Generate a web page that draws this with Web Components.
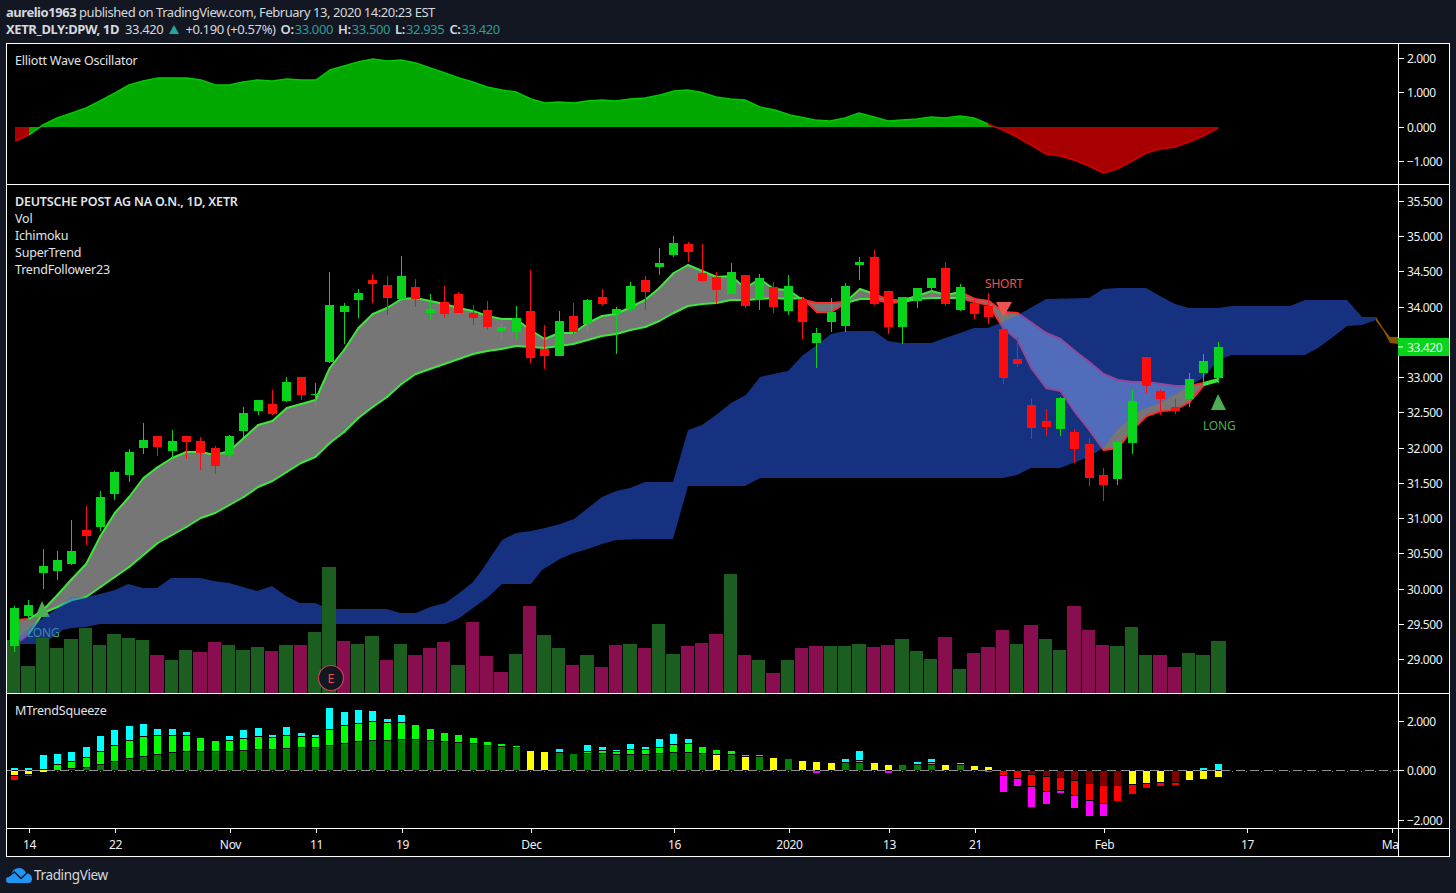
<!DOCTYPE html>
<html>
<head>
<meta charset="utf-8">
<title>XETR_DLY:DPW</title>
<style>
  html, body { margin: 0; background: #131722; overflow: hidden; }
  body { font-family: "Noto Sans", "Liberation Sans", sans-serif; }
</style>
</head>
<body>
<tv-page>
  <tv-header slot="header">
    <div class="title"><b>aurelio1963</b> published on TradingView.com, February 13, 2020 14:20:23 EST</div>
    <div class="quote">
      <b>XETR_DLY:DPW, 1D</b>
      <span class="last">33.420</span>
      <svg class="up" width="10" height="9" viewBox="0 0 10 9"><path d="M5 0 10 9H0Z" fill="#26a69a"/></svg>
      <span>+0.190 (+0.57%)</span>
      <tv-ohlc label="O:" value="33.000"></tv-ohlc>
      <tv-ohlc label="H:" value="33.500"></tv-ohlc>
      <tv-ohlc label="L:" value="32.935"></tv-ohlc>
      <tv-ohlc label="C:" value="33.420"></tv-ohlc>
    </div>
  </tv-header>
  <tv-frame slot="frame">
    <tv-pane style="height:140px">
      <tv-legend slot="legend">Elliott Wave Oscillator</tv-legend>
      <tv-osc-plot slot="plot"></tv-osc-plot>
      <tv-price-axis slot="axis" top="44" height="140" ticks="2.000:58,1.000:92,0.000:127,−1.000:161"></tv-price-axis>
    </tv-pane>
    <tv-pane style="height:508px" class="sep">
      <tv-legend slot="legend"><b>DEUTSCHE POST AG NA O.N., 1D, XETR</b><br>Vol<br>Ichimoku<br>SuperTrend<br>TrendFollower23</tv-legend>
      <tv-main-plot slot="plot"></tv-main-plot>
      <tv-price-axis slot="axis" top="185" height="508" tag="33.420" tag-y="347"
        ticks="35.500:201,35.000:236,34.500:271,34.000:307,33.000:377,32.500:412,32.000:448,31.500:483,31.000:518,30.500:553,30.000:589,29.500:624,29.000:659"></tv-price-axis>
    </tv-pane>
    <tv-pane style="height:134px" class="sep">
      <tv-legend slot="legend">MTrendSqueeze</tv-legend>
      <tv-squeeze-plot slot="plot"></tv-squeeze-plot>
      <tv-price-axis slot="axis" top="694" height="134" ticks="2.000:721,0.000:770,−2.000:820"></tv-price-axis>
    </tv-pane>
    <tv-time-axis></tv-time-axis>
  </tv-frame>
  <tv-footer slot="footer">TradingView</tv-footer>
</tv-page>

<script>
const FONT = '"Noto Sans", "Liberation Sans", sans-serif';
const PLOT_W = 1391;
const xAt = i => 14.5 + 14.33 * i;
const pts = a => a.map(p => p.join(',')).join(' ');

// wraps page coordinates into an svg that only shows its own pane
function plotSvg(top, height, body) {
    return `<style>:host{display:block;height:100%;background:#000} svg{display:block}</style>
    <svg width="${PLOT_W}" height="${height}" viewBox="7 ${top} ${PLOT_W} ${height}">${body}</svg>`;
}

class TvPage extends HTMLElement {
    constructor() {
        super();
        this.attachShadow({ mode: 'open' });
        this.shadowRoot.innerHTML = `<style>
          :host { display: flex; flex-direction: column; width: 1456px; height: 893px; background: #131722; }
        </style>
        <slot name="header"></slot><slot name="frame"></slot><slot name="footer"></slot>`;
    }
}

class TvHeader extends HTMLElement {
    constructor() {
        super();
        this.attachShadow({ mode: 'open' });
        this.shadowRoot.innerHTML = `<style>
          :host { display: block; height: 43px; box-sizing: border-box; padding: 4px 0 0 6px; color: #d6d8de;
                  font: 13px/17px ${FONT}; letter-spacing: -0.4px; white-space: nowrap; }
          ::slotted(.title) { height: 17px; letter-spacing: -0.46px; }
          ::slotted(.quote) { display: flex; align-items: center; gap: 6px; height: 17px; letter-spacing: -0.38px; }
        </style><slot></slot>`;
    }
}

class TvOhlc extends HTMLElement {
    constructor() {
        super();
        this.attachShadow({ mode: 'open' });
        this.shadowRoot.innerHTML = `<style>
          :host { display: inline-flex; margin-left: -1px; }
          b { font-weight: 600; color: #d6d8de; margin-right: 1px; }
          span { color: #2a9d94; }
        </style><b></b><span></span>`;
    }
    connectedCallback() {
        this.shadowRoot.querySelector('b').textContent = this.getAttribute('label');
        this.shadowRoot.querySelector('span').textContent = this.getAttribute('value');
    }
}

class TvFrame extends HTMLElement {
    constructor() {
        super();
        this.attachShadow({ mode: 'open' });
        this.shadowRoot.innerHTML = `<style>
          :host { display: flex; flex-direction: column; box-sizing: border-box; width: 1444px; height: 814px;
                  margin-left: 6px; border: 1px solid #fff; background: #000; }
          ::slotted(.sep) { border-top: 1px solid #fff; }
        </style><slot></slot>`;
    }
}

class TvPane extends HTMLElement {
    constructor() {
        super();
        this.attachShadow({ mode: 'open' });
        this.shadowRoot.innerHTML = `<style>
          :host { display: grid; grid-template-columns: 1391px 51px; position: relative; flex: none; box-sizing: content-box; }
          .legend { position: absolute; left: 8px; top: 8px; z-index: 2; }
        </style>
        <div class="legend"><slot name="legend"></slot></div>
        <slot name="plot"></slot><slot name="axis"></slot>`;
    }
}

class TvLegend extends HTMLElement {
    constructor() {
        super();
        this.attachShadow({ mode: 'open' });
        this.shadowRoot.innerHTML = `<style>
          :host { display: block; color: #e2e4e8; font: 12.5px/17px ${FONT}; letter-spacing: -0.2px; white-space: nowrap; }
          ::slotted(b) { font-weight: 600; }
        </style><slot></slot>`;
    }
}

class TvPriceAxis extends HTMLElement {
    constructor() {
        super();
        this.attachShadow({ mode: 'open' });
    }
    connectedCallback() {
        const top = +this.getAttribute('top'), h = +this.getAttribute('height');
        const ticks = this.getAttribute('ticks').split(',').map(t => t.split(':'));
        let body = ticks.map(([label, y]) =>
            `<rect x="1399" y="${y}" width="5" height="1" fill="#fff"/><text x="1407" y="${+y + 4.5}">${label}</text>`).join('');
        const tag = this.getAttribute('tag');
        if (tag) {
            const y = +this.getAttribute('tag-y');
            body += `<rect x="1398" y="${y - 9}" width="51" height="18" fill="#08d41c"/>
              <rect x="1398" y="${y - 0.5}" width="5" height="1" fill="#fff"/>
              <text x="1407" y="${y + 4.5}">${tag}</text>`;
        }
        this.shadowRoot.innerHTML = `<style>
          :host { display: block; background: #000; border-left: 1px solid #fff; box-sizing: border-box; }
          svg { display: block; }
          text { fill: #f0f1f4; font: 12px ${FONT}; letter-spacing: -0.4px; }
        </style><svg width="50" height="${h}" viewBox="1399 ${top} 50 ${h}" overflow="visible">${body}</svg>`;
    }
}

class TvOscPlot extends HTMLElement {
    constructor() {
        super();
        this.attachShadow({ mode: 'open' });
        const line = [[15,141],[29,135],[43,125],[57,118],[72,113],[86,108],[100,101],[115,93],[129,85],[143,81],[158,78],[172,78],[187,78],[201,80],[215,85],[229,85],[243,82],[257,80],[272,81],[287,79],[301,80],[316,80],[330,70],[344,66],[358,62],[373,59],[387,61],[401,60],[416,63],[430,68],[445,73],[459,78],[473,82],[487,87],[502,90],[516,92],[531,99],[545,103],[558,102],[574,103],[587,101],[602,100],[616,101],[630,99],[645,98],[660,95],[674,91],[687,90],[700,92],[716,97],[730,99],[745,100],[760,107],[775,110],[790,115],[815,120],[830,121],[845,118],[859,113],[874,117],[888,121],[902,120],[917,119],[931,117],[945,118],[960,116],[974,118],[988,124]];
        const neg = [[1003,130],[1017,137],[1031,145],[1046,154],[1060,156],[1074,160],[1089,166],[1103,173],[1117,169],[1132,161],[1146,153],[1160,149],[1175,147],[1189,142],[1203,136],[1218,128]];
        const greenLine = line.slice(1);
        this.shadowRoot.innerHTML = plotSvg(44, 140, `
          <polygon points="15,127 29,127 29,135 15,141" fill="#a80000"/>
          <polygon points="29,127 ${pts(greenLine)} 993,127" fill="#00a800"/>
          <polygon points="29,135 41,127 29,127" fill="#00a800"/>
          <polygon points="993,127 ${pts(neg)} 1219,127" fill="#a80000"/>
          <polyline points="15,141 29,135" fill="none" stroke="#d00000" stroke-width="1.5"/>
          <polyline points="${pts(greenLine)}" fill="none" stroke="#00c800" stroke-width="1.5"/>
          <polyline points="988,124 ${pts(neg)}" fill="none" stroke="#d00000" stroke-width="1.5"/>`);
    }
}

const CANDLES = `g 608 646 606 652|g 605 616 600 620|g 566 573 549 589|g 560 571 551 580|g 551 564 520 565|r 530 536 506 545|g 497 527 491 531|g 472 494 471 500|g 452 475 449 482|g 440 448 423 454|r 436 447 436 456|g 441 451 430 458|r 436 442 436 459|r 441 453 437 470|r 448 466 446 474|g 436 455 435 459|g 413 431 407 437|g 400 411 400 415|r 404 414 390 415|g 382 401 377 402|r 377 395 377 400|g 394 395 383 407|g 305 362 272 363|g 306 312 303 344|g 293 300 289 318|r 280 284 274 303|r 285 298 276 315|g 276 299 256 303|r 287 299 279 307|g 309 313 294 320|r 302 314 286 318|r 294 313 292 313|r 313 318 305 325|r 310 327 301 330|g 327 331 324 339|g 318 332 306 340|r 311 358 270 363|r 349 356 325 369|g 321 356 311 356|r 316 332 303 334|g 300 324 299 333|r 297 304 289 306|g 309 314 307 354|g 286 309 282 312|r 280 292 276 310|g 263 267 248 275|g 243 255 236 257|r 244 252 242 262|r 273 281 244 282|r 277 290 272 304|g 272 294 263 294|r 275 306 275 308|g 278 300 274 310|r 287 307 282 313|g 286 311 275 315|r 299 322 297 339|g 333 343 328 368|g 312 322 298 332|g 286 326 283 332|g 262 265 257 280|r 257 304 250 305|r 291 327 291 334|g 297 327 297 344|g 288 301 288 308|g 278 288 278 298|r 268 304 262 306|g 287 310 284 311|r 303 314 300 319|r 306 317 293 324|r 329 378 329 384|r 359 364 337 367|r 405 428 398 439|r 421 427 409 436|g 398 429 397 436|r 432 449 429 463|r 444 478 438 486|r 475 485 468 501|g 442 479 439 485|g 401 443 390 454|r 357 386 357 393|r 391 399 389 415|r 407 411 399 414|g 379 399 373 407|g 361 373 354 384|g 347 378 342 383`
    .split('|').map(s => s.split(' '));

const VOLUME = 'g640 g666 g638 g648 g639 g628 g645 g634 g638 g640 r655 g660 g650 r652 r642 g645 g650 g647 r651 g645 r645 g632 g567 r641 g644 g636 r660 g644 r655 r648 r642 g665 r622 r656 r672 g654 r606 g635 g648 r665 g655 r667 r645 g644 r648 g624 g654 r646 r643 r634 g574 r655 g660 r673 g660 r648 r646 g646 g646 g644 r647 r645 g639 g651 g659 r637 g669 r653 r647 r630 g644 r625 g639 g650 r606 r630 r645 g646 g627 g655 r655 r667 g653 g655 g641'.split(' ');

const BAND_UP = [620,619,610,595,579,564,536,513,497,478,467,458,452,452,455,451,438,425,421,408,404,400,368,350,328,314,308,299,298,301,304,308,311,316,319,319,330,339,333,333,323,316,314,307,300,288,273,265,271,277,276,288,279,289,290,300,303,303,302,289,294,300,300,296,291,295,292,299,301,312,313,323,333,339,351,362,374,380,382,382,384,386,386,383,379];
const BAND_LOW = [645,634,613,607,600,597,587,577,567,555,543,535,527,518,513,505,497,487,481,472,463,457,443,432,418,407,397,384,374,369,364,359,354,351,349,346,347,348,346,344,340,336,334,330,327,321,313,306,304,303,300,300,299,298,299,298,312,312,303,299,299,303,302,299,298,298,298,302,305,328,340,369,388,391,412,430,450,448,430,416,411,410,402,385,381];
const RED_SEGMENTS = [[0,1],[55,58],[60,62],[66,83]];

const CLOUD_UP = [[19,637],[33,625],[43,618],[55,610],[72,597],[86,597],[100,594],[115,590],[128,584],[143,588],[157,588],[171,578],[200,578],[214,581],[229,583],[243,587],[257,591],[272,586],[286,596],[300,603],[315,603],[329,609],[387,609],[400,613],[416,613],[430,607],[445,603],[458,594],[473,582],[482,570],[490,558],[502,540],[516,533],[531,531],[545,528],[560,524],[574,519],[588,508],[602,497],[616,491],[630,488],[645,482],[673,482],[688,430],[702,425],[716,415],[731,403],[746,395],[760,377],[773,374],[788,371],[803,355],[817,345],[831,334],[845,331],[874,331],[888,341],[902,343],[931,343],[945,338],[960,333],[974,328],[988,328],[1003,322],[1018,315],[1032,307],[1046,299],[1089,298],[1103,289],[1118,288],[1146,288],[1160,296],[1175,304],[1189,308],[1218,308],[1232,306],[1290,306],[1305,300],[1347,300],[1362,317],[1376,317]];
const CLOUD_LOW = [[19,644],[43,644],[63,630],[72,628],[86,627],[100,624],[445,624],[458,619],[473,608],[487,598],[502,584],[531,584],[542,570],[560,559],[574,553],[588,549],[602,544],[616,540],[645,539],[673,539],[688,486],[745,486],[760,478],[1003,478],[1017,475],[1031,468],[1060,468],[1089,457],[1103,448],[1117,430],[1137,412],[1160,403],[1189,386],[1203,378],[1218,360],[1232,355],[1305,355],[1318,348],[1333,337],[1347,326],[1362,325],[1376,320]];

class TvMainPlot extends HTMLElement {
    constructor() {
        super();
        this.attachShadow({ mode: 'open' });
        const green = '#08d41c', red = '#ff0d0d';
        const volStart = i => Math.round(7 + 14.33 * i);
        const vols = VOLUME.map((v, i) => {
            const top = +v.slice(1), x = volStart(i), w = i === 84 ? 15 : volStart(i + 1) - 1 - x;
            return `<rect x="${x}" y="${top}" width="${w}" height="${693 - top}" fill="${v[0] === 'g' ? '#1b5e20' : '#880e4f'}"/>`;
        }).join('');

        const up = BAND_UP.map((y, i) => [xAt(i), y]), low = BAND_LOW.map((y, i) => [xAt(i), y]);
        const band = `<polygon points="${pts(up)} ${pts(low.slice().reverse())}" fill="#767676"/>`;
        let lines = '';
        for (let i = 0; i < 84; i++) {
            const isRed = RED_SEGMENTS.some(([a, b]) => i >= a && i < b);
            const col = isRed ? '#f5302f' : '#3be83b';
            lines += `<polyline points="${pts(up.slice(i, i + 2))}" stroke="${col}"/><polyline points="${pts(low.slice(i, i + 2))}" stroke="${col}"/>`;
        }

        const candles = CANDLES.map((c, i) => {
            const x = Math.floor(xAt(i)), col = c[0] === 'g' ? green : red;
            return `<rect x="${x}" y="${c[3]}" width="1" height="${c[4] - c[3]}" fill="${col}"/>
                    <rect x="${x - 4}" y="${c[1]}" width="9" height="${c[2] - c[1]}" fill="${col}"/>`;
        }).join('');

        this.shadowRoot.innerHTML = plotSvg(185, 508, `
          <style>text{font:12px ${FONT};letter-spacing:-.2px} .ln polyline{fill:none;stroke-width:2;stroke-linecap:round}</style>
          ${band}
          <g class="ln">${lines}</g>
          <polygon points="42,601 50,617 35,617" fill="#4caf50"/>
          <text x="27" y="637" fill="#4caf50">LONG</text>
          <polygon points="1218,394 1226,410 1211,410" fill="#4caf50"/>
          <text x="1203" y="430" fill="#4caf50">LONG</text>
          <polygon points="996,302 1012,302 1003.5,317" fill="#ef5350"/>
          <text x="985" y="288" fill="#ef5350">SHORT</text>
          <polygon points="${pts(CLOUD_UP)} ${pts(CLOUD_LOW.slice().reverse())}" fill="#2962ff" fill-opacity=".5"/>
          <polygon points="1376,317 1383,328 1390,337 1398,337 1398,344 1390,343 1383,330 1376,321" fill="#ff9800" fill-opacity=".55"/>
          <g shape-rendering="crispEdges">${vols}${candles}</g>
          <circle cx="331" cy="678" r="12.5" fill="#131722" stroke="#c8434f" stroke-width="1.2"/>
          <text x="331" y="682.5" text-anchor="middle" fill="#ef5350" style="font-size:12.5px">E</text>`);
    }
}

const SQUEEZE = `c219-226 y227-240 r243-255|c219-226 y227-237 r240-243|c180-222 y225-231|c177-207 l210-225|c171-198 l201-219 d222-226|c156-186 l189-216 d219-226|c123-168 l171-207 d210-226|c105-150 l153-198 d201-226|c93-135 l138-189 d192-226|c87-123 l126-183 d186-226|c102-120 l123-177 d180-226|c102-120 l123-171 d174-226|c111-120 l123-168 d171-226|l129-168 d171-226|l138-168 d171-226|c123-135 l138-168 d171-226|c105-129 l132-165 d168-226|c99-123 l126-162 d165-226|c120-126 l129-162 d165-226|c96-120 l123-159 d162-226|c114-123 l126-156 d159-226|c120-126 l129-156 d159-226|c39-102 l105-150 d153-226|c51-90 l93-144 d147-226|c45-84 l87-138 d141-226|c48-78 l81-135 d138-226|c72-81 l84-135 d138-226|c60-81 l84-132 d135-226|l90-132 d135-226|l102-135 d138-226|l114-138 d141-226|l120-141 d144-226|l129-144 d147-226|l141-150 d153-226|l147-153 d156-226|l153-156 d159-226|y168-226|y171-226|c162-171 d174-226|d177-226|c150-168 l171-174 d177-226|c156-165 l168-174 d177-226|c165-168 l171-177 d180-226|c147-162 l165-177 d180-226|c156-162 l165-177 d180-226|c132-156 l159-174 d177-226|c117-147 l150-171 d174-226|c132-144 l147-171 d174-226|l156-174 d177-226|l165-177 y180-226|l168-177 d180-226|l180-183 y186-226|l180-183 d186-226|y189-226|d192-226|y198-226|y201-226 m228-234|y204-226|c192-201 d204-226|c168-195 l198-201 d204-226|y204-226|y210-226 m228-234|d210-226|c201-207 d210-226|c192-201 l204-207 d210-226|y210-226|c204-207 d210-226|y213-226|y216-226 m228-231|r228-240 m243-291|r228-249 m252-273|k228-237 r240-273 m276-336|k228-243 r246-288 m291-327|k228-246 r249-285 m288-294|k228-255 r258-300 m303-339|k228-264 r267-315 m318-363|k228-270 r273-324 m327-363|k228-270 r273-318|y228-267 r270-297|y228-264 r267-279|y228-261 r264-273|k228-261 r264-270|y228-255|c219-226 y228-252|c207-226 y228-246`.split('|');
const SQ_COL = { c: '#00ffff', l: '#00ff00', d: '#008000', y: '#ffff00', r: '#ff0000', k: '#800000', m: '#ff00ff' };

class TvSqueezePlot extends HTMLElement {
    constructor() {
        super();
        this.attachShadow({ mode: 'open' });
        let zero = '';
        for (let i = -1; i < 97; i++) {
            zero += `<rect x="${Math.round(xAt(i) + 3)}" y="770" width="9" height="1" fill="#909090"/>`;
            if (i >= 0) zero += `<rect x="${Math.floor(xAt(i))}" y="771" width="1" height="1" fill="#808080"/>`;
        }
        const bars = SQUEEZE.map((row, i) => {
            const x = Math.round(xAt(i) - 3.5);
            return row.split(' ').map(s => {
                const [t, b] = s.slice(1).split('-').map(Number);
                const y1 = Math.round(695 + t / 3), y2 = Math.round(695 + b / 3);
                return `<rect x="${x}" y="${y1}" width="7" height="${Math.max(1, y2 - y1)}" fill="${SQ_COL[s[0]]}"/>`;
            }).join('');
        }).join('');
        this.shadowRoot.innerHTML = plotSvg(694, 134, `<g shape-rendering="crispEdges">${zero}${bars}</g>`);
    }
}

class TvTimeAxis extends HTMLElement {
    constructor() {
        super();
        this.attachShadow({ mode: 'open' });
        const marks = [[29,'14'],[115,'22'],[230,'Nov'],[316,'11'],[402,'19'],[531,'Dec'],[674,'16'],[789,'2020',1],[889,'13'],[975,'21'],[1104,'Feb'],[1247,'17'],[1392,'Mar']];
        const body = marks.map(([x, t, bold]) =>
            `<rect x="${x}" y="829" width="1" height="4" fill="#fff"/><text x="${x + 0.5}" y="848.5" text-anchor="middle"${bold ? ' font-weight="700"' : ''}>${t}</text>`).join('');
        this.shadowRoot.innerHTML = `<style>
          :host { display: grid; grid-template-columns: 1391px 51px; height: 28px; box-sizing: border-box; border-top: 1px solid #fff; background: #000; }
          svg { display: block; }
          .corner { border-left: 1px solid #fff; }
          text { fill: #f0f1f4; font: 12px ${FONT}; letter-spacing: -0.3px; }
        </style>
        <svg width="${PLOT_W}" height="27" viewBox="7 829 ${PLOT_W} 27">${body}</svg>
        <div class="corner"></div>`;
    }
}

class TvFooter extends HTMLElement {
    constructor() {
        super();
        this.attachShadow({ mode: 'open' });
        this.shadowRoot.innerHTML = `<style>
          :host { display: flex; align-items: center; gap: 2px; height: 36px; padding-left: 6px; color: #d6d8de;
                  font: 13.5px ${FONT}; letter-spacing: -0.35px; }
          svg { display: block; }
        </style>
        <svg width="26" height="15" viewBox="0 0 26 15">
          <path d="M0 12C0 9.5 2 8 4.5 8 5.500 3.500 9 0 13 0c3.500 0 6 2 7 5 3.200 0 6 2.500 6 6 0 2.500-1.500 4-4 4H3C1.200 15 0 14 0 12Z" fill="#2196f3"/>
          <polyline points="1.500,9 8.500,4 15,10.500 22,4" fill="none" stroke="#131722" stroke-width="1.400"/>
        </svg><slot></slot>`;
    }
}

customElements.define('tv-page', TvPage);
customElements.define('tv-header', TvHeader);
customElements.define('tv-ohlc', TvOhlc);
customElements.define('tv-frame', TvFrame);
customElements.define('tv-pane', TvPane);
customElements.define('tv-legend', TvLegend);
customElements.define('tv-price-axis', TvPriceAxis);
customElements.define('tv-osc-plot', TvOscPlot);
customElements.define('tv-main-plot', TvMainPlot);
customElements.define('tv-squeeze-plot', TvSqueezePlot);
customElements.define('tv-time-axis', TvTimeAxis);
customElements.define('tv-footer', TvFooter);
</script>
</body>
</html>
